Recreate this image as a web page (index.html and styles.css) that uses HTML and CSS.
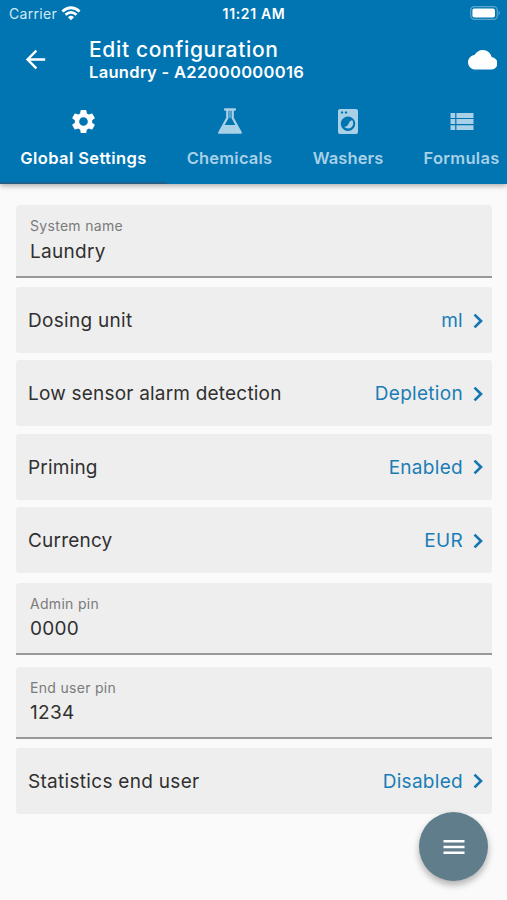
FILE: index.html
```html
<!DOCTYPE html>
<html lang="en">
<head>
<meta charset="utf-8">
<title>Edit configuration</title>
<link rel="stylesheet" href="styles.css">
</head>
<body>
<header class="header">
  <div class="status">
    <div class="carrier"><span>Carrier</span>
      <svg width="20" height="15" viewBox="0 0 20 15" fill="none" stroke="#fff" stroke-width="2.7"><path d="M1.4 5.5Q10-2 18.6 5.5M4.5 8.8Q10 4 15.5 8.8"/><path d="M7 11.2Q10 8.5 13 11.2L10 14.2Z" fill="#fff" stroke="none"/></svg>
    </div>
    <div class="time">11:21 AM</div>
    <svg class="battery" width="31" height="14" viewBox="0 0 31 14"><rect x=".7" y=".7" width="26.6" height="12.6" rx="3.6" fill="none" stroke="#fff" stroke-opacity=".35" stroke-width="1.2"/><rect x="2.4" y="2.4" width="22.6" height="9.2" rx="2" fill="#fff"/><path d="M28.6 4.5Q31 7 28.6 9.5Z" fill="#fff" fill-opacity=".4"/></svg>
  </div>
  <div class="bar">
    <svg class="back" width="29" height="29" viewBox="0 0 24 24" fill="#fff"><path d="M20 11H7.83l5.59-5.59L12 4l-8 8 8 8 1.41-1.41L7.83 13H20z"/></svg>
    <div class="titles">
      <h1 class="title">Edit configuration</h1>
      <div class="subtitle">Laundry - A22000000016</div>
    </div>
    <svg class="cloud" width="29.5" height="29.5" viewBox="0 0 24 24" fill="#fff"><path d="M19.35 10.04C18.67 6.59 15.64 4 12 4 9.11 4 6.6 5.64 5.35 8.04 2.34 8.36 0 10.91 0 14c0 3.31 2.69 6 6 6h13c2.76 0 5-2.24 5-5 0-2.64-2.05-4.78-4.65-4.96z"/></svg>
  </div>
  <nav class="tabs">
    <div class="tab tab-global active">
      <svg width="29" height="29" viewBox="0 0 24 24" fill="currentColor"><path d="M19.14 12.94c.04-.3.06-.61.06-.94 0-.32-.02-.64-.07-.94l2.03-1.58c.18-.14.23-.41.12-.61l-1.92-3.32c-.12-.22-.37-.29-.59-.22l-2.39.96c-.5-.38-1.03-.7-1.62-.94l-.36-2.54c-.04-.24-.24-.41-.48-.41h-3.84c-.24 0-.43.17-.47.41l-.36 2.54c-.59.24-1.13.57-1.62.94l-2.39-.96c-.22-.08-.47 0-.59.22L2.74 8.87c-.12.21-.08.47.12.61l2.03 1.58c-.05.3-.09.63-.09.94s.02.64.07.94l-2.03 1.58c-.18.14-.23.41-.12.61l1.92 3.32c.12.22.37.29.59.22l2.39-.96c.5.38 1.03.7 1.62.94l.36 2.54c.05.24.24.41.48.41h3.84c.24 0 .44-.17.47-.41l.36-2.54c.59-.24 1.13-.56 1.62-.94l2.39.96c.22.08.47 0 .59-.22l1.92-3.32c.12-.22.07-.47-.12-.61l-2.01-1.58zM12 15.6c-1.98 0-3.6-1.62-3.6-3.6s1.62-3.6 3.6-3.6 3.6 1.62 3.6 3.6-1.62 3.6-3.6 3.6z"/></svg>
      <span>Global Settings</span>
    </div>
    <div class="tab tab-chemicals">
      <svg width="26" height="27" viewBox="0 0 26 27"><path d="M8 1.5H18M10.3 1.5V10L2.2 24.7H23.8L15.7 10V1.5" fill="none" stroke="currentColor" stroke-width="2.3" stroke-linejoin="round" stroke-linecap="round"/><path d="M6.2 17H19.8L24 25H2Z" fill="currentColor"/><path d="M13 2V10" stroke="currentColor" stroke-width="1"/></svg>
      <span>Chemicals</span>
    </div>
    <div class="tab tab-washers">
      <svg width="22" height="27" viewBox="0 0 22 27"><path fill="currentColor" fill-rule="evenodd" d="M3 1H19Q21 1 21 3V24Q21 26 19 26H3Q1 26 1 24V3Q1 1 3 1ZM5 3.3a1.2 1.2 0 1 0 .01 0ZM9 3.3a1.2 1.2 0 1 0 .01 0ZM11 8.5a7.2 7.2 0 1 0 .01 0Z"/><path fill="currentColor" d="M7.2 19.1Q10.3 18.8 11.3 16.2Q12.2 13 15.1 12Q17.6 15.8 14.6 19.2Q11 22 7.2 19.1Z"/></svg>
      <span>Washers</span>
    </div>
    <div class="tab tab-formulas">
      <svg width="24" height="27" viewBox="0 0 24 27" fill="currentColor"><path d="M.5 5H5.2V9.9H.5ZM6.4 5H23.5V9.9H6.4ZM.5 11.1H5.2V16H.5ZM6.4 11.1H23.5V16H6.4ZM.5 17.2H5.2V22H.5ZM6.4 17.2H23.5V22H6.4Z"/></svg>
      <span>Formulas</span>
    </div>
  </nav>
</header>
<main class="list">
  <div class="field first"><label class="label">System name</label><div class="value">Laundry</div></div>
  <div class="group">
    <div class="row"><span>Dosing unit</span><span class="pick">ml<svg width="10" height="16" viewBox="0 0 10 16"><path d="M1.5 1.6 8 8 1.5 14.4"/></svg></span></div>
    <div class="row"><span class="tight">Low sensor alarm detection</span><span class="pick">Depletion<svg width="10" height="16" viewBox="0 0 10 16"><path d="M1.5 1.6 8 8 1.5 14.4"/></svg></span></div>
    <div class="row"><span class="tight">Priming</span><span class="pick">Enabled<svg width="10" height="16" viewBox="0 0 10 16"><path d="M1.5 1.6 8 8 1.5 14.4"/></svg></span></div>
    <div class="row"><span class="tight">Currency</span><span class="pick">EUR<svg width="10" height="16" viewBox="0 0 10 16"><path d="M1.5 1.6 8 8 1.5 14.4"/></svg></span></div>
  </div>
  <div class="field"><label class="label">Admin pin</label><div class="value">0000</div></div>
  <div class="field last"><label class="label">End user pin</label><div class="value">1234</div></div>
  <div class="row"><span>Statistics end user</span><span class="pick">Disabled<svg width="10" height="16" viewBox="0 0 10 16"><path d="M1.5 1.6 8 8 1.5 14.4"/></svg></span></div>
</main>
<button class="fab" aria-label="Menu"><svg width="22" height="16" viewBox="0 0 22 16" fill="#fff"><path d="M.5 1H21.5V3.4H.5ZM.5 6.8H21.5V9.2H.5ZM.5 12.6H21.5V15H.5Z"/></svg></button>
</body>
</html>
```
FILE: styles.css
```css
* { box-sizing: border-box; }
body {
  margin: 0;
  height: 900px;
  overflow: hidden;
  background: #fafafa;
  color: #303030;
  font-family: Inter, "Liberation Sans", sans-serif;
}
svg { display: block; flex: none; }
.header {
  height: 184px;
  background: #0075b2;
  color: #fff;
  box-shadow: 0 2px 5px rgba(0, 0, 0, .3);
}
.status {
  display: grid;
  grid-template-columns: 1fr auto 1fr;
  align-items: center;
  height: 27px;
  padding: 0 6px 0 9px;
  font-size: 14px;
}
.carrier { display: flex; align-items: center; gap: 5px; color: #d5e9f4; letter-spacing: .3px; }
.carrier svg { position: relative; left: -1px; }
.time { font-weight: 600; font-size: 14px; letter-spacing: .65px; margin-right: 2px; }
.battery { justify-self: end; position: relative; top: -1px; }
.bar { display: flex; align-items: center; height: 65px; padding: 0 10px 0 21px; }
.titles { flex: 1; padding-left: 39px; }
.title { margin: 0; font-size: 21px; line-height: 25px; font-weight: 500; letter-spacing: .65px; }
.subtitle { font-size: 16.5px; line-height: 20px; font-weight: 600; letter-spacing: .32px; }
.tabs { display: flex; height: 92px; }
.tab {
  display: flex;
  flex-direction: column;
  align-items: center;
  flex: none;
  padding-top: 15px;
  color: #a8d0e7;
  font-size: 16.5px;
  font-weight: 600;
  line-height: 20px;
  letter-spacing: .2px;
  white-space: nowrap;
}
.tab svg { height: 29px; }
.tab span { margin-top: 12px; }
.tab-global { width: 167px; letter-spacing: .38px; }
.tab-chemicals { width: 125px; }
.tab-washers { width: 112px; letter-spacing: .1px; }
.tab-formulas { width: 115px; letter-spacing: .3px; }
.active { color: #fff; border-bottom: 2px solid #1f5f88; }
.list { padding: 21px 15px 0 16px; }
.field {
  height: 72px;
  margin-bottom: 12px;
  padding: 12px 14px 0;
  background: #eee;
  border-bottom: 2px solid #989898;
  border-radius: 4px 4px 0 0;
}
.first { height: 73px; margin-bottom: 9px; }
.last { margin-bottom: 9px; }
.label { display: block; font-size: 14px; line-height: 17px; color: #7b7b7b; letter-spacing: .3px; }
.value { margin-top: 5px; font-size: 19px; line-height: 24px; letter-spacing: .3px; }
.first .value { margin-top: 6px; }
.group { display: grid; gap: 7.4px; margin-bottom: 9.8px; }
.row {
  display: flex;
  align-items: center;
  justify-content: space-between;
  height: 66px;
  padding: 1px 9px 0 12px;
  background: #eee;
  border-radius: 3px;
  font-size: 19px;
  letter-spacing: .3px;
}
.tight { letter-spacing: .2px; }
.pick { display: flex; align-items: center; gap: 10px; color: #1a7db5; }
.pick path { fill: none; stroke: #1477b1; stroke-width: 2.7; }
.fab {
  position: absolute;
  left: 419px;
  top: 812px;
  display: grid;
  place-items: center;
  width: 69px;
  height: 69px;
  border: 0;
  border-radius: 50%;
  background: #607d8b;
  box-shadow: 0 4px 7px rgba(0, 0, 0, .3);
}
```
